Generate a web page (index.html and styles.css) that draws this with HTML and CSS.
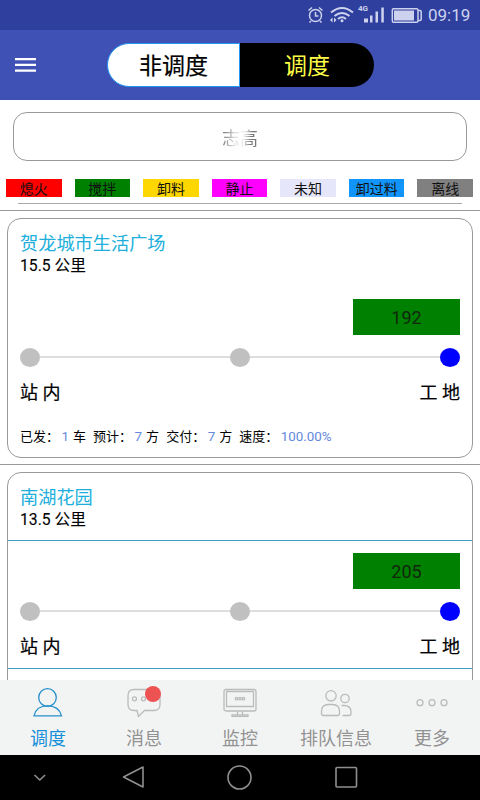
FILE: index.html
```html
<!DOCTYPE html>
<html lang="zh-CN">
<head>
<meta charset="utf-8">
<title>调度</title>
<link rel="stylesheet" href="styles.css">
</head>
<body>
<div class="screen">
  <div class="status">
    <svg width="117" height="22" viewBox="307 4 117 22" fill="none" stroke="#cdd2ee" stroke-width="1.5">
      <circle cx="316.500" cy="15.500" r="6"/><path d="M316.500 12v4h3M309.500 10.500l3.500-3M323.500 10.500l-3.500-3M312 21l-1.500 1.500M321 21l1.500 1.500"/>
      <path stroke-width="2" d="M332 12.500q11-9 22 0M335.500 16q7.500-6 15 0M339 19q4-3.500 8 0"/><circle cx="343" cy="20.800" r="1.500" fill="#cdd2ee" stroke="none"/>
      <path fill="#cdd2ee" stroke="none" d="M331 20l2.500-2.500v5zM337.500 20l-2.500-2.500v5zM365 18.500h4v4h-4zM371 15.500h2.500v7H371zM376.500 11.500h2.500v11h-2.500zM382.300 7.500h2.500v15h-2.500z"/>
      <text class="signal-label" x="359" y="11">4G</text>
      <path d="M394.500 8.700h23q1.500 0 1.500 1.500v10.600q0 1.500-1.500 1.500h-23q-1.200 0-1.200-1.500V10.200q0-1.500 1.200-1.500zM419 10.500h2q1.200 0 1.200 1.200v7.600q0 1.200-1.200 1.200h-2"/><rect x="395" y="10.500" width="20" height="10" fill="#cdd2ee" stroke="none"/>
    </svg>
    <span class="clock">09:19</span>
  </div>
  <header class="header">
    <svg class="menu" width="21" height="14" viewBox="0 0 21 14"><path d="M0 1.200h21M0 6.900h21M0 12.600h21" stroke="#fff" stroke-width="2.300"/></svg>
    <div class="switch"><span class="off">非调度</span><span class="on">调度</span></div>
  </header>
  <main class="content">
    <div class="search"><span>志高</span></div>
    <div class="legend">
      <span class="red">熄火</span><span class="green">搅拌</span><span class="gold">卸料</span><span class="magenta">静止</span><span class="lavender">未知</span><span class="blue">卸过料</span><span class="gray">离线</span>
    </div>
    <div class="edge"></div>
    <section class="item">
      <article class="card">
        <div class="head"><h2>贺龙城市生活广场</h2><p>15.5 公里</p></div>
        <div class="trip">
          <div class="truck">192</div>
          <div class="track"><i></i><b></b><i></i><b></b><i class="here"></i></div>
          <div class="ends"><span>站 内</span><span>工 地</span></div>
        </div>
        <div class="stats"><span>已发：</span><em>1</em><span>车</span><span class="next">预计：</span><em>7</em><span>方</span><span class="next">交付：</span><em>7</em><span>方</span><span class="next">速度：</span><em>100.00%</em></div>
      </article>
    </section>
    <section class="item">
      <article class="card ruled">
        <div class="head"><h2>南湖花园</h2><p>13.5 公里</p></div>
        <div class="trip">
          <div class="truck">205</div>
          <div class="track"><i></i><b></b><i></i><b></b><i class="here"></i></div>
          <div class="ends"><span>站 内</span><span>工 地</span></div>
        </div>
      </article>
    </section>
  </main>
  <nav class="tabs">
    <a class="active"><svg width="36" height="32" viewBox="0 0 36 32"><circle cx="17.500" cy="11.500" r="8.800"/><path d="M4 29.800q2-10 13.500-10T31.500 29.800z"/></svg><span>调度</span></a>
    <a><svg width="36" height="32" viewBox="0 0 36 32"><path d="M8 3.500h20q6 0 6 6v9q0 6-6 6H18.500l-6 6-1.500-6H8q-6 0-6-6v-9q0-6 6-6z"/><circle cx="8.500" cy="12.800" r="2"/><circle cx="17.500" cy="12.800" r="2"/><circle class="dot" cx="27" cy="8" r="8"/></svg><span>消息</span></a>
    <a><svg width="36" height="32" viewBox="0 0 36 32"><rect x="2" y="3.500" width="32" height="21.500" rx="2"/><path d="M4.500 5.500h27v15h-27zM15.500 25v3.500M20.500 25v3.500M10 28.800h16v1.500H10z"/><circle cx="14.500" cy="12.700" r="1.200"/><circle cx="18" cy="12.700" r="1.200"/><circle cx="21.500" cy="12.700" r="1.200"/></svg><span>监控</span></a>
    <a><svg width="36" height="32" viewBox="0 0 36 32"><circle cx="13" cy="9.800" r="5.200"/><circle cx="27" cy="12.500" r="4.200"/><path d="M5.500 29.500q-2 0-2-2v-2q0-7 7-7h4q7 0 7 7v2q0 2-2 2zM23.500 19.500h2.500q7 0 7 6.500v1.500q0 2-2 2h-6.500"/></svg><span>排队信息</span></a>
    <a><svg width="36" height="32" viewBox="0 0 36 32"><circle cx="6" cy="16.700" r="3"/><circle cx="18" cy="16.700" r="3"/><circle cx="30" cy="16.700" r="3"/></svg><span>更多</span></a>
  </nav>
  <footer class="system">
    <svg width="480" height="45" viewBox="0 0 480 45" fill="none" stroke="#8f8f8f" stroke-width="1.600"><path d="M34.500 20l5.300 5 5.300-5"/><path d="M143 12v20l-19.500-10z" stroke-linejoin="round"/><circle cx="239.500" cy="22.500" r="11.500"/><rect x="336" y="12.500" width="20.500" height="19.500" rx="1"/></svg>
  </footer>
</div>
</body>
</html>
```

FILE: styles.css
```css
* { box-sizing: border-box; }
body { margin: 0; font-family: Roboto, "Noto Sans CJK SC", sans-serif; color: #111; }
.screen { width: 480px; height: 800px; display: flex; flex-direction: column; overflow: hidden; background: #fff; }
.status { height: 30px; flex: none; background: #2e3f9e; display: flex; justify-content: flex-end; align-items: center; padding-right: 9px; }
.signal-label { font: bold 8px Roboto, sans-serif; fill: #cdd2ee; stroke: none; }
.clock { font-size: 17px; line-height: 30px; color: #cdd2ee; margin-left: 5px; width: 43px; }
.header { height: 70px; flex: none; background: #3f51b5; display: flex; align-items: center; padding-left: 15px; }
.menu { flex: none; }
.switch { display: flex; width: 267px; height: 44px; margin-left: 71px; font-size: 23px; text-align: center; }
.off { width: 133px; background: #fff; color: #000; border: 1px solid #2196f3; border-radius: 22px 0 0 22px; line-height: 46px; -webkit-text-stroke: 0.2px #000; }
.on { width: 134px; background: #000; color: #ffff45; border-radius: 0 22px 22px 0; line-height: 47px; }
.content { flex: 1; min-height: 0; overflow: hidden; }
.search { height: 49px; margin: 12px 13px 0; border: 1px solid #999; border-radius: 14px; text-align: center; font-size: 18px; line-height: 51px; color: #888; }
.search span { display: inline-block; background: linear-gradient(100deg, #888 15%, #ddd 38%, #eee 58%, #777 75%); background-clip: text; color: transparent; }
.legend { display: flex; justify-content: space-between; padding: 0 7px 0 6px; margin-top: 18px; }
.legend span { width: 55.500px; height: 18px; font-size: 14px; line-height: 20px; text-align: center; }
.red { background: #f00; }
.green, .truck { background: #008000; }
.gold { background: #ffd700; }
.magenta { background: #f0f; }
.lavender { background: #e6e6fa; }
.blue { background: #1295fa; }
.gray { background: #808080; }
.edge { height: 7px; margin: 6px 18px 0; border-top: 1px solid #aaa; }
.item { height: 254px; border-top: 1px solid #999; padding: 7px 7px 0; }
.card { height: 240px; border: 1px solid #999; border-radius: 14px; }
.head { height: 68px; padding: 13px 12px 0; }
h2 { margin: 0; font-size: 18.200px; line-height: 24px; font-weight: 400; color: #20afdc; }
p { margin: -1px 0 0; font-size: 15.700px; line-height: 21px; color: #000; -webkit-text-stroke: 0.1px #000; }
.trip { height: 128px; padding: 12px 12px 0; }
.ruled .head { border-bottom: 1px solid #3c9dc4; }
.ruled .trip { border-bottom: 1px solid #3c9dc4; }
.truck { width: 107px; height: 36px; margin-left: auto; font-size: 18px; line-height: 38px; text-align: center; color: #12270c; }
.track { display: flex; align-items: center; height: 20px; margin-top: 12px; }
.track i { width: 20px; height: 19px; border-radius: 50%; background: #c0c0c0; }
.track b { flex: 1; height: 1.500px; background: #ddd; }
.track .here { background: #00f; }
.ends { display: flex; justify-content: space-between; margin-top: 14px; font-size: 18px; line-height: 24px; color: #000; -webkit-text-stroke: 0.2px #000; }
.stats { display: flex; height: 24px; margin-top: 10px; padding-left: 12px; font-size: 13px; line-height: 24px; color: #000; white-space: nowrap; }
.stats em { font-style: normal; font-size: 13.400px; color: #6589dc; margin: 0 4px 0 2.500px; }
.stats .next { margin-left: 7px; }
.tabs { height: 75px; flex: none; background: #f2f4f4; display: grid; grid-template-columns: repeat(5, 1fr); }
.tabs a { display: flex; flex-direction: column; align-items: center; padding-top: 6px; color: #929292; font-size: 18px; line-height: 26px; }
.tabs svg { fill: none; stroke: #bbb; stroke-width: 1.300; overflow: visible; }
.tabs span { margin-top: 8px; white-space: nowrap; }
.tabs .active { color: #168fd8; }
.tabs .active svg { stroke: #258fca; }
.tabs .dot { fill: #ed5353; stroke: none; }
.system { height: 45px; flex: none; background: #000; }
.system svg { display: block; }
```
